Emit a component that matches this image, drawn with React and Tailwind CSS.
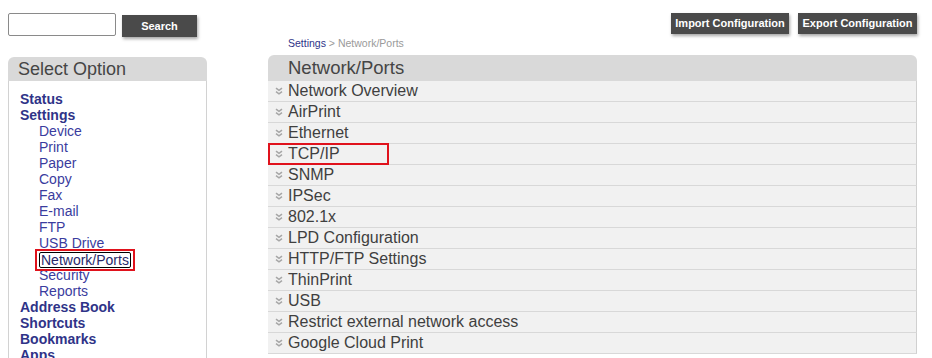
import React from 'react';

const menu = [
  { label: 'Status', top: true },
  { label: 'Settings', top: true },
  { label: 'Device' },
  { label: 'Print' },
  { label: 'Paper' },
  { label: 'Copy' },
  { label: 'Fax' },
  { label: 'E-mail' },
  { label: 'FTP' },
  { label: 'USB Drive' },
  { label: 'Network/Ports', active: true },
  { label: 'Security' },
  { label: 'Reports' },
  { label: 'Address Book', top: true },
  { label: 'Shortcuts', top: true },
  { label: 'Bookmarks', top: true },
  { label: 'Apps', top: true },
];

const rows = [
  'Network Overview',
  'AirPrint',
  'Ethernet',
  'TCP/IP',
  'SNMP',
  'IPSec',
  '802.1x',
  'LPD Configuration',
  'HTTP/FTP Settings',
  'ThinPrint',
  'USB',
  'Restrict external network access',
  'Google Cloud Print',
];

// small double chevron used in front of every section row
const Expand = () => (
  <svg width="8" height="8" viewBox="0 0 8 8" className="shrink-0">
    <polyline points="1,1.2 4,3.4 7,1.2" fill="none" stroke="#a6a6a6" strokeWidth="1.5" />
    <polyline points="1,4.6 4,6.8 7,4.6" fill="none" stroke="#a6a6a6" strokeWidth="1.5" />
  </svg>
);

const DarkButton = ({ children, className = '' }) => (
  <button
    className={`bg-[#4a4a4a] text-white font-bold text-[11px] shadow-[1px_2px_3px_rgba(0,0,0,0.35)] ${className}`}
  >
    {children}
  </button>
);

export default function App() {
  return (
    <div
      className="w-[932px] h-[358px] overflow-hidden bg-white flex"
      style={{ fontFamily: '"Liberation Sans", Arial, sans-serif' }}
    >
      {/* Left column */}
      <div className="ml-[8px] w-[200px] pt-[13px] shrink-0">
        <div className="flex items-start">
          <input
            className="w-[108px] h-[23px] border border-[#8a8a8a] rounded-[2px] outline-none"
            type="text"
          />
          <DarkButton className="ml-[6px] mt-[2px] w-[75px] h-[22px]">Search</DarkButton>
        </div>

        <div className="mt-[20px] w-[199px]">
          <div className="h-[24px] bg-[#d9d9d9] rounded-t-[6px] pl-[10px] pb-[1px] flex items-center text-[18px] text-[#454545] leading-none">
            Select Option
          </div>
          <div className="border-x border-[#d2d2d2] h-[300px] pt-[10px]">
            {menu.map((m) => (
              <div key={m.label} className="h-[16px] leading-[16px] text-[14px]">
                {m.top ? (
                  <span className="ml-[11px] font-bold text-[#2f3388]">{m.label}</span>
                ) : m.active ? (
                  <span className="ml-[26px] inline-block relative top-[-2px] border-2 border-[#e0121c] px-[2px] py-[1px] leading-[16px]">
                    <span className="inline-block border-[1.5px] border-black rounded-[2px] px-[1px] leading-[14px] text-[#2a2a6a]">
                      {m.label}
                    </span>
                  </span>
                ) : (
                  <span className="ml-[30px] text-[#3a3c9e]">{m.label}</span>
                )}
              </div>
            ))}
          </div>
        </div>
      </div>

      {/* Right column */}
      <div className="ml-[60px] w-[649px] shrink-0">
        <div className="flex justify-end gap-[9px] pt-[13px]">
          <DarkButton className="w-[118px] h-[21px]">Import Configuration</DarkButton>
          <DarkButton className="w-[119px] h-[21px]">Export Configuration</DarkButton>
        </div>

        <div className="pl-[20px] mt-[1px] h-[17px] text-[10.5px] leading-[17px]">
          <span className="text-[#2f3388]">Settings</span>
          <span className="text-[#9a9a9a]"> &gt; Network/Ports</span>
        </div>

        <div className="mt-[3px]">
          <div className="h-[26px] bg-[#d9d9d9] rounded-t-[6px] pl-[20px] flex items-center text-[18.5px] text-[#454545] leading-none">
            Network/Ports
          </div>
          {rows.map((r) => (
            <div
              key={r}
              className="relative h-[21px] bg-[#f1f1f1] border-b border-[#d8d8d8] border-r border-r-[#d0d0d0] flex items-center pl-[7px] gap-[5px] text-[16px] text-[#3f3f3f] leading-none"
            >
              <Expand />
              <span>{r}</span>
              {r === 'TCP/IP' && (
                <span className="absolute left-0 top-[-1px] w-[121px] h-[22px] border-2 border-[#e0121c]" />
              )}
            </div>
          ))}
        </div>
      </div>
    </div>
  );
}
